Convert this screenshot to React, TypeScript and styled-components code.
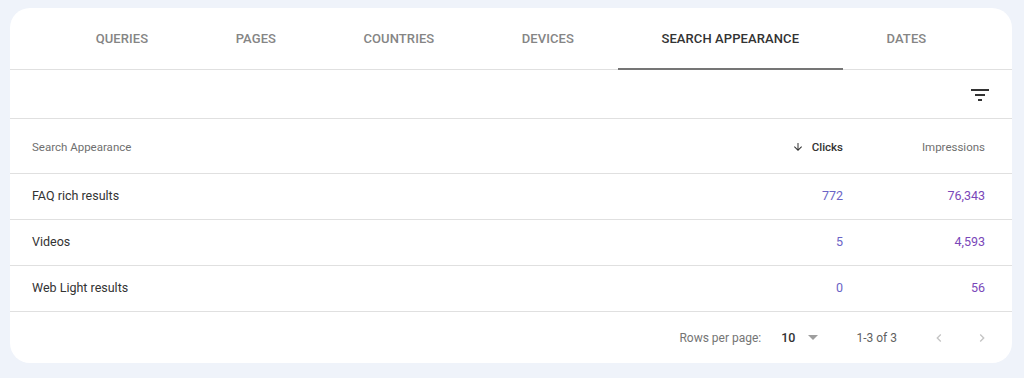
import React, { FC } from "react";
import styled, { createGlobalStyle } from "styled-components";

const GlobalStyle = createGlobalStyle`
  html, body {
    margin: 0;
    padding: 0;
    background: #eff3fa;
  }
  body {
    font-family: Roboto, "Liberation Sans", Arial, sans-serif;
    -webkit-font-smoothing: antialiased;
  }
`;

interface IRow {
  name: string;
  clicks: string;
  impressions: string;
}

const tabs = ["QUERIES", "PAGES", "COUNTRIES", "DEVICES", "SEARCH APPEARANCE", "DATES"];
const activeTab = "SEARCH APPEARANCE";

const rows: IRow[] = [
  { name: "FAQ rich results", clicks: "772", impressions: "76,343" },
  { name: "Videos", clicks: "5", impressions: "4,593" },
  { name: "Web Light results", clicks: "0", impressions: "56" },
];

const FilterIcon: FC = () => (
  <svg width="18" height="12" viewBox="0 0 18 12">
    <rect x="0" y="0" width="18" height="2" fill="#333" />
    <rect x="4" y="5" width="10" height="2" fill="#333" />
    <rect x="7" y="10" width="4" height="2" fill="#333" />
  </svg>
);

const ArrowDown: FC = () => (
  <svg width="12" height="12" viewBox="0 0 24 24">
    <path d="M20 12l-1.41-1.41L13 16.17V4h-2v12.17l-5.58-5.59L4 12l8 8 8-8z" fill="#333" />
  </svg>
);

const Chevron: FC<{ dir: "left" | "right" }> = ({ dir }) => (
  <svg width="16" height="16" viewBox="0 0 24 24">
    <path
      d={dir === "left" ? "M15.41 7.41L14 6l-6 6 6 6 1.41-1.41L10.83 12z" : "M10 6L8.59 7.41 13.17 12l-4.58 4.59L10 18l6-6z"}
      fill="#c4c4c4"
    />
  </svg>
);

const App: FC = () => {
  return (
    <>
      <GlobalStyle />
      <Page>
        <Card>
          <Tabs>
            {tabs.map((t) => (
              <Tab key={t} active={t === activeTab}>
                {t}
              </Tab>
            ))}
          </Tabs>
          <Toolbar>
            <IconButton>
              <FilterIcon />
            </IconButton>
          </Toolbar>
          <HeaderRow>
            <HeadCell>Search Appearance</HeadCell>
            <HeadCell align="right" sorted>
              <ArrowDown />
              Clicks
            </HeadCell>
            <HeadCell align="right">Impressions</HeadCell>
          </HeaderRow>
          {rows.map((r) => (
            <Row key={r.name}>
              <Cell>{r.name}</Cell>
              <Cell align="right" color="#6b63c6">
                {r.clicks}
              </Cell>
              <Cell align="right" color="#7a47b9">
                {r.impressions}
              </Cell>
            </Row>
          ))}
          <Footer>
            <FooterLabel>Rows per page:</FooterLabel>
            <PageSize>
              10
              <Caret />
            </PageSize>
            <Range>1-3 of 3</Range>
            <Pager>
              <Chevron dir="left" />
              <Chevron dir="right" />
            </Pager>
          </Footer>
        </Card>
      </Page>
    </>
  );
};

export default App;

const Page = styled.div`
  width: 1024px;
  height: 378px;
  padding: 8px 12px 15px 10px;
  box-sizing: border-box;
`;

const Card = styled.div`
  background: #fff;
  border-radius: 20px;
  height: 100%;
  overflow: hidden;
  display: flex;
  flex-direction: column;
`;

const Tabs = styled.div`
  display: flex;
  justify-content: center;
  height: 61px;
  border-bottom: 1px solid #e0e0e0;
`;

const Tab = styled.div<{ active?: boolean }>`
  display: flex;
  align-items: center;
  justify-content: center;
  padding: 0 43.7px;
  font-size: 13px;
  font-weight: 500;
  letter-spacing: 0.1px;
  color: ${(p) => (p.active ? "#333" : "#858585")};
  border-bottom: 2px solid ${(p) => (p.active ? "#757575" : "transparent")};
  margin-bottom: -1px;
`;

const Toolbar = styled.div`
  display: flex;
  justify-content: flex-end;
  align-items: center;
  height: 48px;
  border-bottom: 1px solid #e0e0e0;
  padding-right: 23px;
`;

const IconButton = styled.div`
  display: flex;
  padding-top: 2px;
`;

const grid = `
  display: grid;
  grid-template-columns: 1fr 120px 142px;
  padding: 0 27px 0 22px;
  align-items: center;
  border-bottom: 1px solid #e0e0e0;
  box-sizing: border-box;
`;

const HeaderRow = styled.div`
  ${grid};
  height: 55px;
  padding-top: 1px;
`;

const HeadCell = styled.div<{ align?: "right"; sorted?: boolean }>`
  display: flex;
  align-items: center;
  justify-content: ${(p) => (p.align === "right" ? "flex-end" : "flex-start")};
  gap: 8px;
  font-size: 11.5px;
  font-weight: ${(p) => (p.sorted ? 500 : 400)};
  color: ${(p) => (p.sorted ? "#333" : "#6f6f6f")};
`;

const Row = styled.div`
  ${grid};
  height: 46px;
  padding-bottom: 2px;
`;

const Cell = styled.div<{ align?: "right"; color?: string }>`
  font-size: 12.5px;
  color: ${(p) => p.color || "#333"};
  text-align: ${(p) => p.align || "left"};
`;

const Footer = styled.div`
  flex: 1;
  display: flex;
  align-items: center;
  justify-content: flex-end;
  padding: 0 22px 0 0;
  font-size: 12px;
  color: #757575;
`;

const FooterLabel = styled.span``;

const PageSize = styled.div`
  display: flex;
  align-items: center;
  margin-left: 20px;
  font-size: 12.5px;
  font-weight: 500;
  color: #333;
  gap: 13px;
`;

const Caret = styled.span`
  width: 0;
  height: 0;
  border-left: 5px solid transparent;
  border-right: 5px solid transparent;
  border-top: 5px solid #9e9e9e;
`;

const Range = styled.span`
  margin-left: 38px;
  color: #5f5f5f;
`;

const Pager = styled.div`
  display: flex;
  gap: 27px;
  margin-left: 34px;
`;
